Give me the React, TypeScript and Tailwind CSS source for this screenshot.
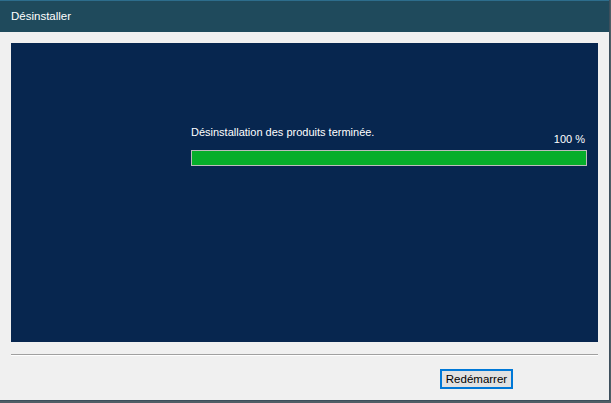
export default function App() {
	return (
		<div className="flex h-[403px] w-[611px] flex-col bg-[#4f5e66] font-['Segoe_UI','Liberation_Sans',sans-serif] text-[11px]">
			<div className="flex h-[401px] w-[610px] flex-col border-r border-b border-[#3d4f5c] bg-[#f0f0f0]">
				<div className="flex h-[32px] items-center border-t border-[#2d6d8c] bg-[#1f4a5c] pl-[11px] text-[11.5px] text-white">
					Désinstaller
				</div>
				<div className="mx-[11px] mt-[11px] h-[299px] bg-[#07264f] pl-[180px] pr-[11px] pt-[81px] text-white">
					<div className="text-[11px] leading-[16px]">Désinstallation des produits terminée.</div>
					<div className="-mt-[8px] flex justify-end pr-[2px] text-[11px] leading-[14px]">100 %</div>
					<div className="mt-[4px] h-[16px] border border-[#bcbcbc] bg-[#06ae2a]" />
				</div>
				<div className="mx-[11px] mt-[12px] h-[2px] border-t border-[#a0a0a0] border-b-white border-b" />
				<div className="flex justify-end pr-[96px] pt-[13px]">
					<button className="h-[20px] w-[73px] border-2 border-[#0078d7] bg-[#e1e1e1] text-[11.5px] leading-[14px] text-black">
						Redémarrer
					</button>
				</div>
			</div>
		</div>
	);
}
